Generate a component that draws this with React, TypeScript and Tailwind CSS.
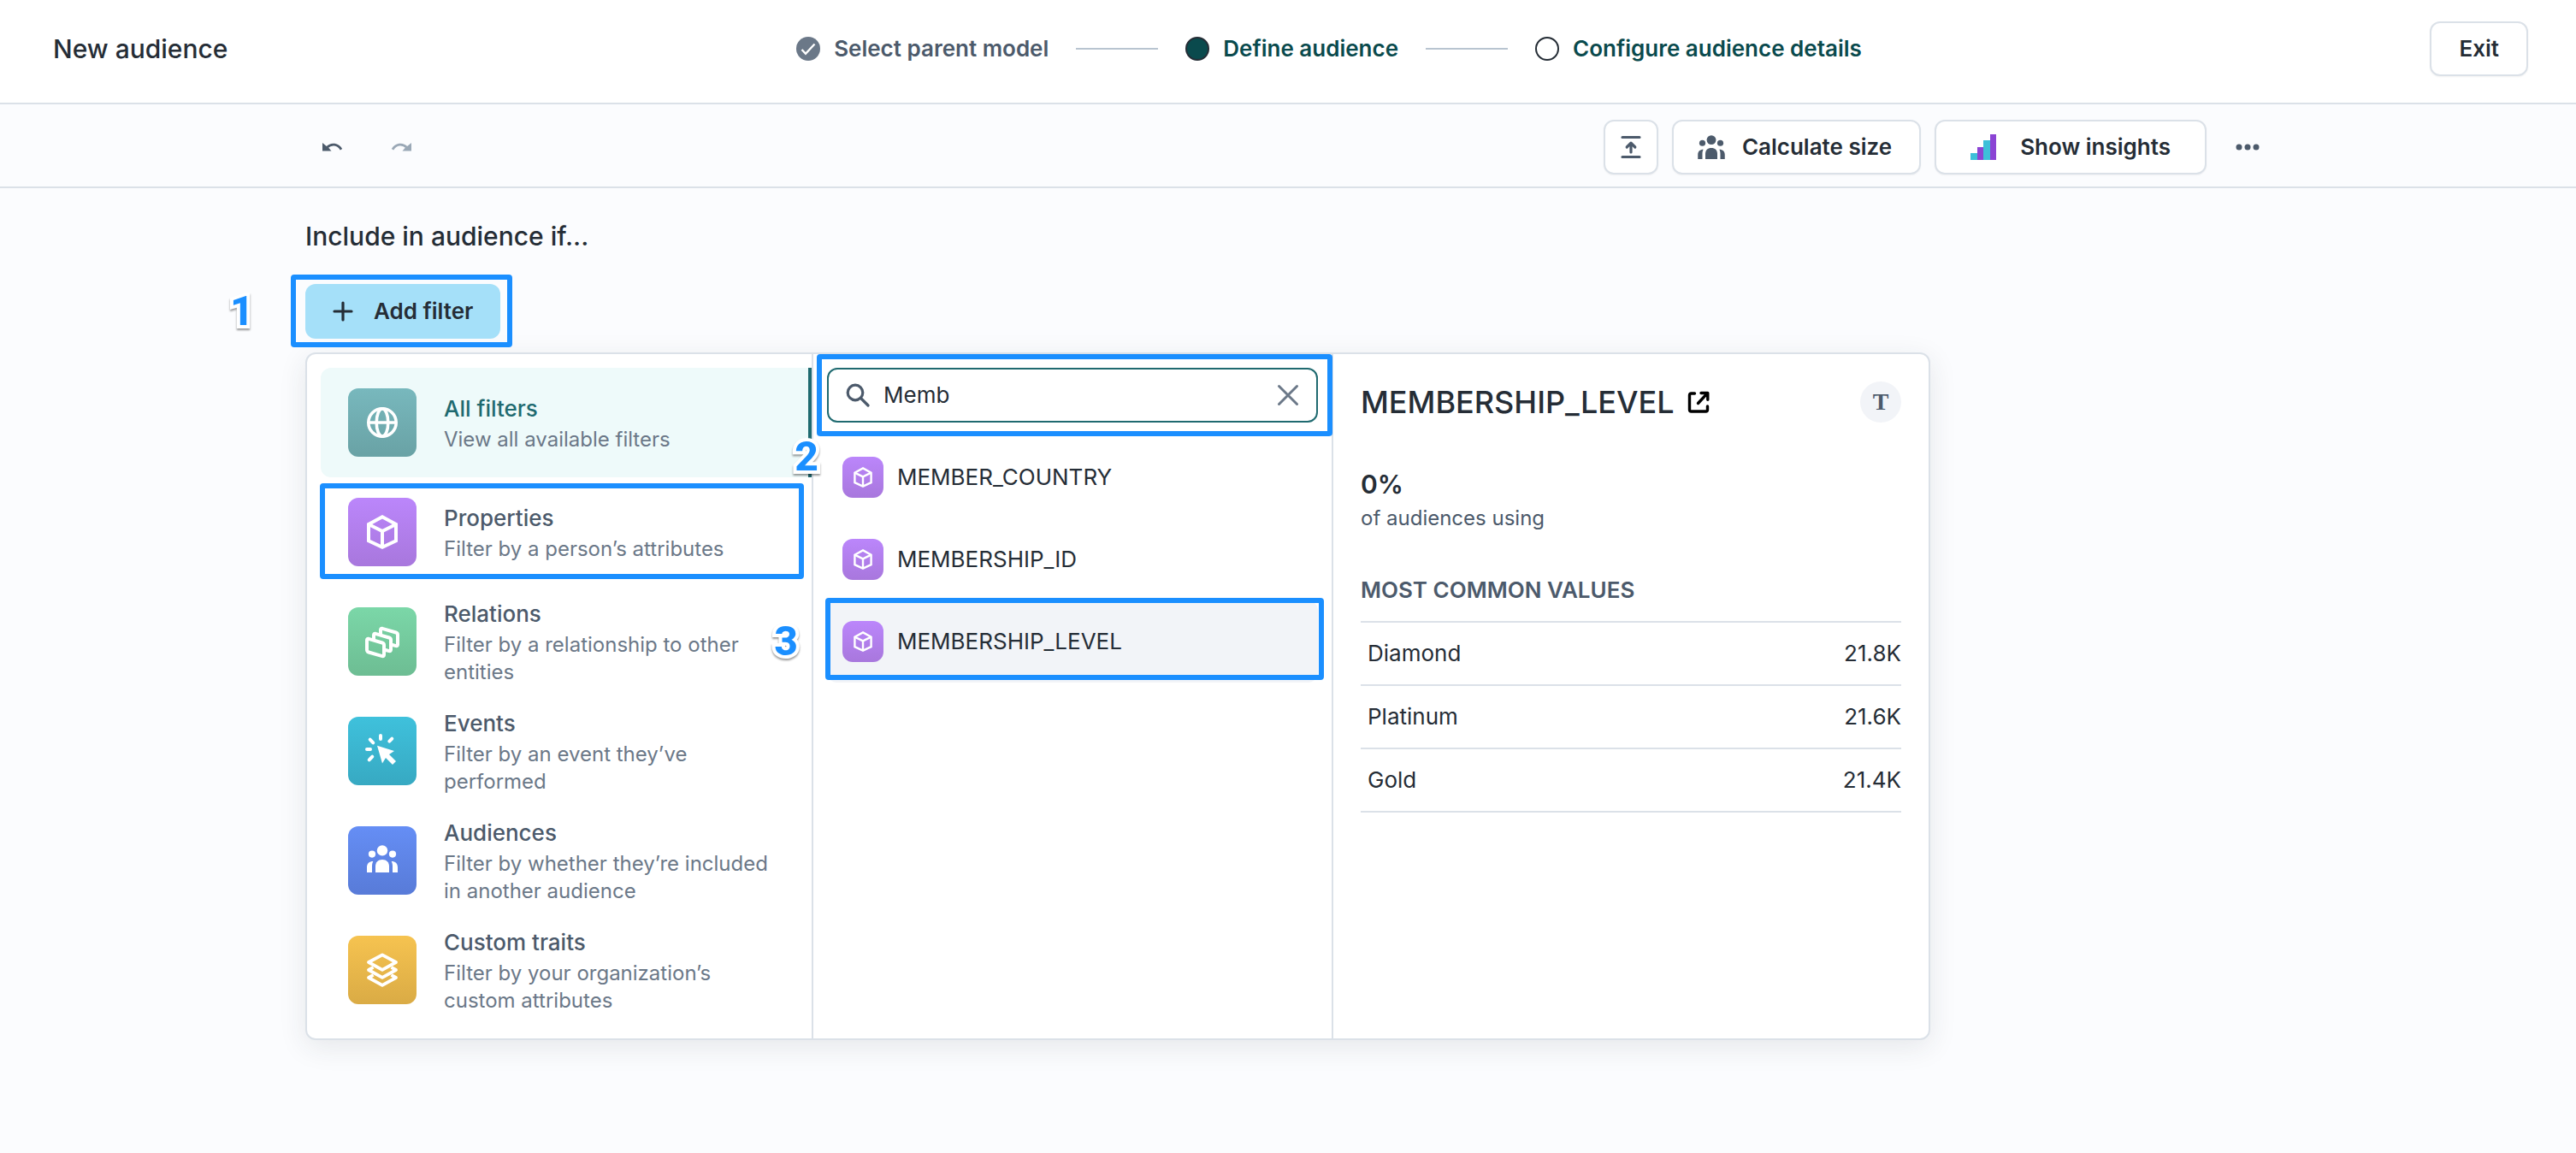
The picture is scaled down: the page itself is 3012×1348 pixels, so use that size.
import type { ReactNode } from "react";

const buttonBase =
  "flex h-16 items-center rounded-xl border-2 border-[#dbe1e8] bg-white text-[26px] leading-8 font-semibold text-[#252d36] shadow-xs";

function CubeIcon() {
  return (
    <g stroke="white" strokeWidth="4" fill="none" strokeLinejoin="miter">
      <path d="M40 22.3 56 31v19.2L40 57.8 24 50.2V31Z" />
      <path d="m24 31 16 8 16-8M40 39v18" />
    </g>
  );
}

function GlobeIcon() {
  return (
    <g stroke="white" strokeWidth="3.6" fill="none">
      <circle cx="40" cy="40" r="16.2" />
      <ellipse cx="40" cy="40" rx="6.8" ry="16.2" />
      <path d="M24 40h32" />
    </g>
  );
}

function RelationsIcon() {
  return (
    <g stroke="white" strokeWidth="4" fill="none" strokeLinejoin="round">
      <path d="M22 38.5c0-1.500.7-2 2-1.700l16 4.700c1.300.4 2 1.200 2 2.500v11.500c0 1.400-.7 1.900-2 1.600l-16-4.600c-1.300-.4-2-1.200-2-2.500Z" />
      <path d="M30 37v-4.500c0-1.500.7-2 2-1.700l16 4.700c1.300.4 2 1.200 2 2.500v11.500c0 1.400-.7 1.900-2 1.600l-5-1.400" />
      <path d="M38 31v-4.500c0-1.500.7-2 2-1.700l16 4.700c1.300.4 2 1.200 2 2.500v11.500c0 1.400-.7 1.900-2 1.600l-5-1.400" />
    </g>
  );
}

function EventsIcon() {
  return (
    <g>
      <path
        d="M38 22v4M51.300 25.700l-3 3M25.700 26.700l3.600 3.600M22 38h4M28.300 46.700l-3.600 3.600"
        stroke="white"
        strokeWidth="4"
        strokeLinecap="round"
      />
      <path d="m34 33.700 20 6.300-6 4 8 8-4 4-8-8-4 6.500Z" fill="white" />
    </g>
  );
}

function PeopleShape() {
  return (
    <g fill="currentColor">
      <circle cx="40" cy="28.400" r="6.200" />
      <circle cx="28" cy="32.600" r="4.100" />
      <circle cx="52" cy="32.600" r="4.100" />
      <path d="M32 54v-7c0-5 3-8 8-8s8 3 8 8v7Z" />
      <path d="M22 54v-6c0-4.500 2.800-7 7.300-7-1 1.800-1.300 3.800-1.300 6v7Z" />
      <path d="M58 54v-6c0-4.500-2.800-7-7.300-7 1 1.800 1.300 3.800 1.300 6v7Z" />
    </g>
  );
}

function LayersIcon() {
  return (
    <g stroke="white" strokeWidth="3.800" fill="none" strokeLinejoin="round">
      <path d="M40 22.300 56 31 40 39.800 24 31Z" />
      <path d="m29.500 36.800-5.500 3.200 16 8.800L56 40l-5.500-3.200" />
      <path d="m29.500 45.800-5.500 3.200 16 8.800L56 49l-5.500-3.200" />
    </g>
  );
}

function Tile({ className, children }: { className: string; children: ReactNode }) {
  return (
    <svg viewBox="0 0 80 80" aria-hidden="true" className={`shrink-0 bg-linear-to-b ${className}`}>
      {children}
    </svg>
  );
}

const categories = [
  { title: "All filters", text: "View all available filters", tile: "size-20 rounded-xl from-[#78b8bd] to-[#69a2a5]", icon: <GlobeIcon /> },
  { title: "Properties", text: "Filter by a person’s attributes", tile: "size-20 rounded-xl from-[#bb86fb] to-[#a877dd]", icon: <CubeIcon /> },
  { title: "Relations", text: "Filter by a relationship to other entities", tile: "size-20 rounded-xl from-[#7bd7a8] to-[#6dbd93]", icon: <RelationsIcon /> },
  { title: "Events", text: "Filter by an event they’ve performed", tile: "size-20 rounded-xl from-[#3fc1dc] to-[#37a9c2]", icon: <EventsIcon /> },
  { title: "Audiences", text: "Filter by whether they’re included in another audience", tile: "size-20 rounded-xl from-[#658ef5] to-[#587bd8]", icon: <PeopleShape /> },
  { title: "Custom traits", text: "Filter by your organization’s custom attributes", tile: "size-20 rounded-xl from-[#f6c350] to-[#daab45]", icon: <LayersIcon /> },
];

const results = ["MEMBER_COUNTRY", "MEMBERSHIP_ID", "MEMBERSHIP_LEVEL"];

const commonValues = [
  ["Diamond", "21.8K"],
  ["Platinum", "21.6K"],
  ["Gold", "21.4K"],
];

function Outline({ className }: { className: string }) {
  return <div className={`pointer-events-none absolute z-10 rounded-sm border-6 border-[#1b8fff] ${className}`} />;
}

function Marker({ className, children }: { className: string; children: ReactNode }) {
  return (
    <span
      className={`pointer-events-none absolute z-20 font-['Roboto',sans-serif] text-5xl leading-12 font-extrabold text-[#1b8fff] drop-shadow-[0_2px_1px_rgba(0,0,0,0.4)] [-webkit-text-stroke:8px_white] [paint-order:stroke_fill] [stroke-linejoin:round] ${className}`}
    >
      {children}
    </span>
  );
}

function Header() {
  return (
    <header className="flex items-center justify-between border-b-2 border-[#dbe1e8] bg-white pt-[25px] pr-14 pb-[31px] pl-[62px]">
      <h1 className="text-[30px] leading-10 font-medium">New audience</h1>
      <ol className="flex items-center gap-8 text-[26px] leading-8 font-semibold text-[#0a4a4d]">
        <li className="flex items-center gap-4 text-[#4c5a6b]">
          <svg viewBox="0 0 28 28" className="size-7" aria-hidden="true">
            <circle cx="14" cy="14" r="14" fill="#6b7888" />
            <path d="m6.500 15 4.500 4.800L21.500 8.500" fill="none" stroke="white" strokeWidth="2.400" />
          </svg>
          Select parent model
        </li>
        <li aria-hidden="true" className="h-0.5 w-24 bg-[#b8c4d0]" />
        <li className="flex items-center gap-4">
          <span className="size-7 rounded-full border-2 border-[#252d36] bg-[#0a4a4d]" />
          Define audience
        </li>
        <li aria-hidden="true" className="h-0.5 w-24 bg-[#b8c4d0]" />
        <li className="flex items-center gap-4">
          <span className="size-7 rounded-full border-2 border-[#252d36] bg-white" />
          Configure audience details
        </li>
      </ol>
      <button type="button" className={`${buttonBase} px-8`}>Exit</button>
    </header>
  );
}

function Toolbar() {
  return (
    <div className="flex items-center justify-between border-b-2 border-[#dbe1e8] pt-[18px] pr-[352px] pb-[14px] pl-[357px]">
      <div className="flex gap-4">
        <button type="button" aria-label="Undo" className="flex size-16 items-center justify-center text-[#4c5a6b]">
          <svg viewBox="0 0 24 10" className="h-[10px] w-6">
            <path d="M0 0v9.500h10.500L7.600 6.200Z" fill="currentColor" />
            <path d="M5.500 5.200c5-5 12.500-4 16.500 2.600" fill="none" stroke="currentColor" strokeWidth="2.800" />
          </svg>
        </button>
        <button type="button" aria-label="Redo" className="flex size-16 items-center justify-center text-[#9aa8b6]">
          <svg viewBox="0 0 24 10" className="h-[10px] w-6">
            <path d="M24 0v9.500H13.500l2.900-3.300Z" fill="currentColor" />
            <path d="M18.500 5.200C13.500.2 6 1.200 2 7.800" fill="none" stroke="currentColor" strokeWidth="2.800" />
          </svg>
        </button>
      </div>
      <div className="flex gap-4">
        <button type="button" aria-label="Collapse" className={`${buttonBase} w-16 justify-center`}>
          <svg viewBox="0 0 24 28" className="h-7 w-6" fill="none" stroke="#4c5a6b" strokeWidth="3.200" strokeLinecap="round" strokeLinejoin="round">
            <path d="M2 2.500h20M2 25.500h20M12 20v-10.500M7.200 14 12 9.200 16.800 14" />
          </svg>
        </button>
        <button type="button" className={`${buttonBase} gap-5 pr-8 pl-7`}>
          <svg viewBox="22 22 36 32" className="h-7 w-8 text-[#4c5a6b]" aria-hidden="true">
            <PeopleShape />
          </svg>
          Calculate size
        </button>
        <button type="button" className={`${buttonBase} gap-7 px-10`}>
          <svg viewBox="0 0 30 30" className="size-[30px]" aria-hidden="true">
            <path d="M0 22h8v8H0ZM15 7h8v23h-8Z" fill="#3dbfd9" />
            <path d="M8 15h7v15H8ZM23 0h7v30h-7Z" fill="#8b44d4" />
          </svg>
          Show insights
        </button>
        <button type="button" aria-label="More options" className="flex size-16 items-center justify-center">
          <svg viewBox="0 0 28 8" className="h-2 w-7" fill="#4c5a6b">
            <circle cx="4" cy="4" r="3.500" />
            <circle cx="14" cy="4" r="3.500" />
            <circle cx="24" cy="4" r="3.500" />
          </svg>
        </button>
      </div>
    </div>
  );
}

function CategoryList() {
  return (
    <nav className="w-[592px] shrink-0 border-r-2 border-[#dbe1e8] py-4 pl-4">
      {categories.map((c, i) => (
        <div key={c.title} className="relative">
          <button
            type="button"
            className={`flex h-32 w-full items-center gap-8 px-8 text-left ${
              i === 0 ? "rounded-l-xl border-r-4 border-[#1f6a70] bg-[#eefafa]" : ""
            }`}
          >
            <Tile className={`text-white ${c.tile}`}>{c.icon}</Tile>
            <span>
              <span className={`block text-[26px] leading-10 font-medium ${i === 0 ? "text-[#1f6a70]" : "text-[#4c5a6b]"}`}>
                {c.title}
              </span>
              <span className="block text-2xl leading-8 text-[#6b7888]">{c.text}</span>
            </span>
          </button>
          {i === 0 && <Marker className="top-20 -right-2">2</Marker>}
          {i === 1 && <Outline className="top-[7px] right-[9px] bottom-[9px] -left-px" />}
          {i === 2 && <Marker className="top-10 right-4">3</Marker>}
        </div>
      ))}
    </nav>
  );
}

function SearchColumn() {
  return (
    <section className="w-[608px] shrink-0 border-r-2 border-[#dbe1e8] p-4">
      <div className="relative mb-4">
        <label className="flex h-16 items-center gap-4 rounded-xl border-2 border-[#1f6a70] bg-white px-5">
          <svg viewBox="0 0 28 28" className="size-7 shrink-0" fill="none" stroke="#4c5a6b" strokeWidth="3.200" strokeLinecap="round" aria-hidden="true">
            <circle cx="11" cy="11" r="8.800" />
            <path d="m17.500 17.500 8.500 8.500" />
          </svg>
          <input type="text" aria-label="Search filters" defaultValue="Memb" className="min-w-0 flex-1 text-[26px] leading-8 outline-none" />
          <button type="button" aria-label="Clear search">
            <svg viewBox="0 0 26 26" className="size-[26px]" stroke="#6b7888" strokeWidth="3" strokeLinecap="round">
              <path d="m2.500 2.500 21 21M23.500 2.500l-21 21" />
            </svg>
          </button>
        </label>
        <Outline className="-top-4 -right-[17px] -bottom-4 -left-3" />
      </div>
      <ul>
        {results.map((name, i) => (
          <li key={name} className="relative">
            <button
              type="button"
              className={`flex h-24 w-full items-center gap-4 px-[18px] text-[26px] leading-8 ${i === 2 ? "rounded-xl bg-[#f2f4f8]" : ""}`}
            >
              <Tile className="size-12 rounded-xl from-[#bb86fb] to-[#a877dd]">
                <CubeIcon />
              </Tile>
              {name}
            </button>
            {i === 2 && <Outline className="-top-[3px] -right-[7px] bottom-[3px] -left-0.5" />}
          </li>
        ))}
      </ul>
    </section>
  );
}

function Details() {
  return (
    <section className="min-w-0 flex-1 p-8">
      <div className="flex h-12 items-center">
        <h2 className="text-4xl leading-12 font-medium">MEMBERSHIP_LEVEL</h2>
        <a href="#membership-level" aria-label="Open MEMBERSHIP_LEVEL" className="ml-3.5 text-black">
          <svg viewBox="0 0 28 28" className="size-7" fill="none" stroke="currentColor" strokeWidth="3.400" strokeLinejoin="round" strokeLinecap="round">
            <path d="M9.500 4H5.500Q3.500 4 3.500 6v17q0 2 2 2h17q2 0 2-2v-4M17 3.500h7.800v7.800M24.500 3.700 13.500 15.500" />
          </svg>
        </a>
        <span className="ml-auto flex size-12 items-center justify-center rounded-full bg-[#f2f4f8] font-['Liberation_Serif',serif] text-[28px] font-bold text-[#4c5a6b]">
          T
        </span>
      </div>
      <p className="mt-13 text-[30px] leading-10 font-semibold">0%</p>
      <p className="mt-1 text-2xl leading-8 text-[#4c5a6b]">of audiences using</p>
      <table className="mt-13 w-full text-[26px] leading-8">
        <caption className="mb-5 text-left font-semibold text-[#4c5a6b]">MOST COMMON VALUES</caption>
        <tbody className="border-t-2 border-[#dbe1e8]">
          {commonValues.map(([name, count]) => (
            <tr key={name} className="border-b-2 border-[#dbe1e8]">
              <th scope="row" className="py-5 pl-2 text-left font-normal">{name}</th>
              <td className="py-5 text-right">{count}</td>
            </tr>
          ))}
        </tbody>
      </table>
    </section>
  );
}

export default function App() {
  return (
    <div className="min-h-screen bg-[#fbfcfe] font-['Inter',sans-serif] text-[#252d36]">
      <Header />
      <Toolbar />
      <main className="pt-9 pr-[352px] pl-[357px]">
        <h2 className="text-[30px] leading-10 font-medium">Include in audience if...</h2>
        <div className="relative mt-9 w-fit">
          <button type="button" className="flex h-16 items-center gap-6 rounded-xl bg-[#a5e0f9] px-8 text-[26px] leading-8 font-semibold">
            <svg viewBox="0 0 24 24" className="size-6" stroke="currentColor" strokeWidth="3.200" strokeLinecap="round" aria-hidden="true">
              <path d="M12 2v20M2 12h20" />
            </svg>
            Add filter
          </button>
          <Outline className="-top-[11px] -right-[14px] -bottom-[10px] -left-[17px]" />
          <Marker className="top-2 -left-22">1</Marker>
        </div>
        <div className="mt-4 flex w-full max-w-[1900px] rounded-xl border-2 border-[#dbe1e8] bg-white shadow-[0_8px_32px_rgba(37,45,54,0.10)]">
          <CategoryList />
          <SearchColumn />
          <Details />
        </div>
      </main>
    </div>
  );
}
